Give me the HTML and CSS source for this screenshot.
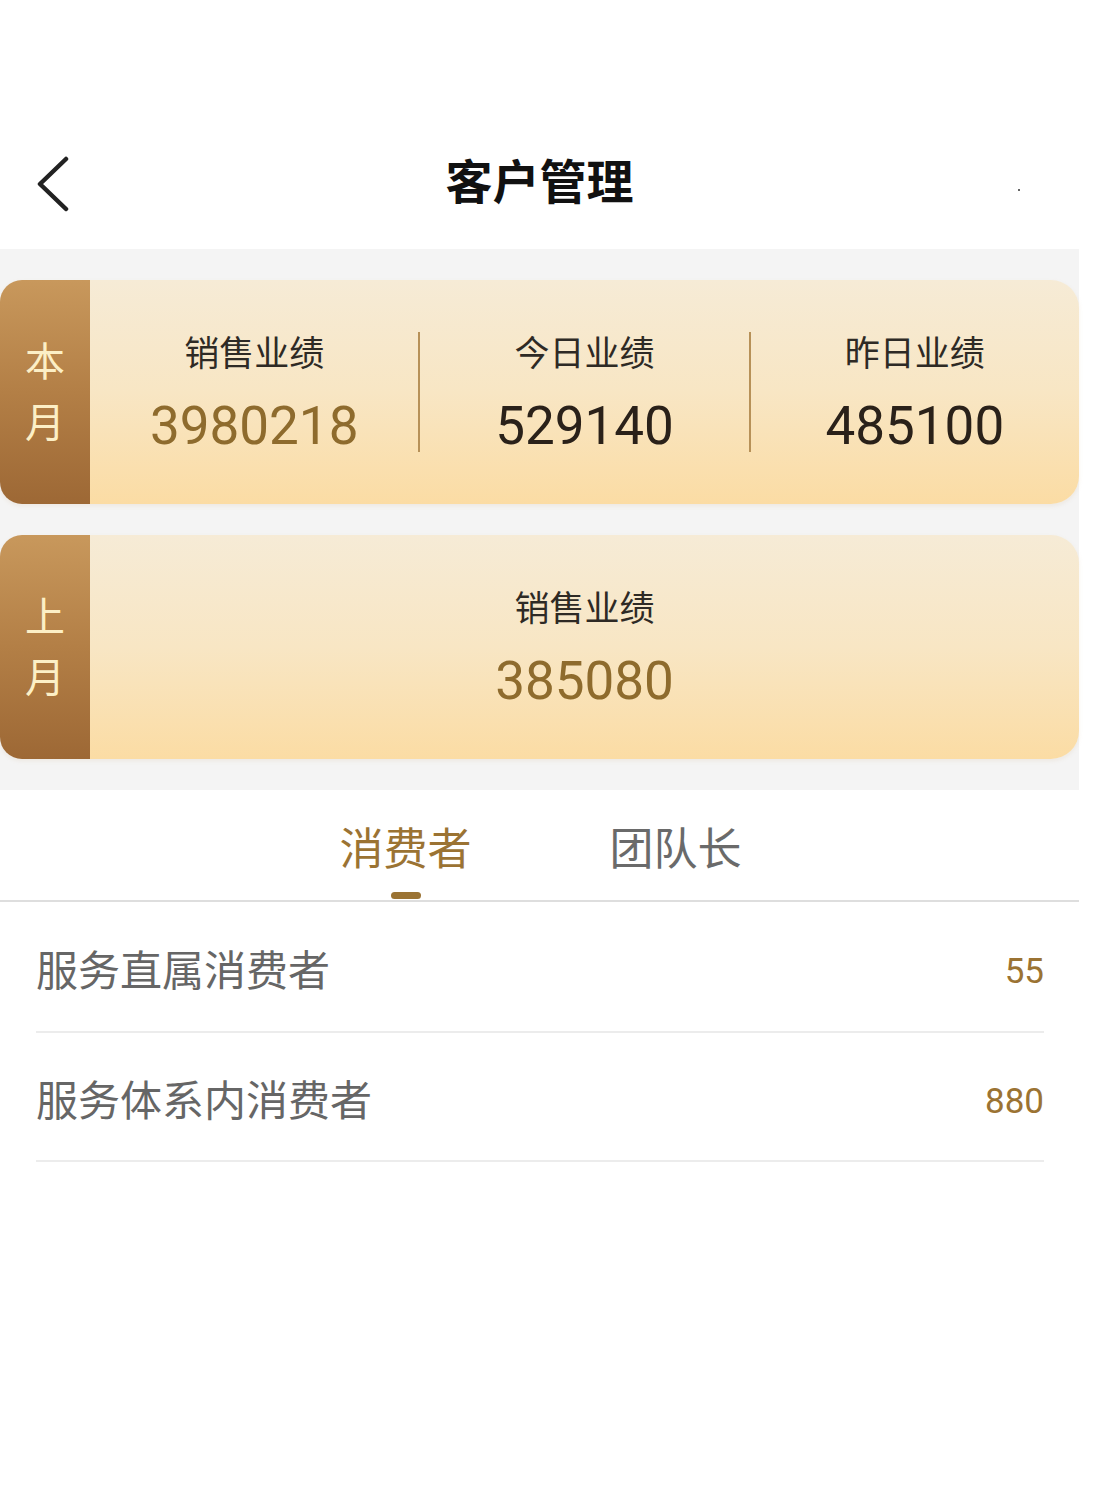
FILE: index.html
```html
<!DOCTYPE html>
<html lang="zh">
<head>
<meta charset="utf-8">
<title>客户管理</title>
<link rel="stylesheet" href="styles.css">
</head>
<body>
<div class="app">
  <header class="nav">
    <a class="back" href="#" aria-label="返回">
      <svg width="40" height="60" viewBox="0 0 40 60"><polyline points="32,7 6,32 32,57" fill="none" stroke="#222" stroke-width="4.5" stroke-linecap="round" stroke-linejoin="round"/></svg>
    </a>
    <h1 class="title">客户管理</h1>
    <span class="dot"></span>
  </header>

  <section class="summary">
    <div class="card">
      <div class="card-tab"><span>本</span><span>月</span></div>
      <div class="card-body">
        <div class="stat">
          <div class="stat-label">销售业绩</div>
          <div class="stat-value gold">3980218</div>
        </div>
        <div class="divider"></div>
        <div class="stat">
          <div class="stat-label">今日业绩</div>
          <div class="stat-value">529140</div>
        </div>
        <div class="divider"></div>
        <div class="stat">
          <div class="stat-label">昨日业绩</div>
          <div class="stat-value">485100</div>
        </div>
      </div>
    </div>
    <div class="card">
      <div class="card-tab"><span>上</span><span>月</span></div>
      <div class="card-body">
        <div class="stat">
          <div class="stat-label">销售业绩</div>
          <div class="stat-value gold">385080</div>
        </div>
      </div>
    </div>
  </section>

  <section class="panel">
    <nav class="tabs">
      <div class="tab active">消费者<span class="indicator"></span></div>
      <div class="tab">团队长</div>
    </nav>
    <ul class="list">
      <li class="row"><span class="row-label">服务直属消费者</span><span class="row-value">55</span></li>
      <li class="row"><span class="row-label">服务体系内消费者</span><span class="row-value">880</span></li>
    </ul>
  </section>
</div>
</body>
</html>
```

FILE: styles.css
```css
* { box-sizing: border-box; }
html, body { margin: 0; padding: 0; background: #fff; }
body {
  font-family: "Noto Sans CJK SC", "Noto Sans", Roboto, sans-serif;
  color: #333;
}
.app { width: 1079px; }

.nav {
  height: 249px;
  background: #fff;
  position: relative;
  display: flex;
  align-items: center;
  justify-content: center;
  padding-top: 122px;
  padding-bottom: 14px;
}
.back {
  position: absolute;
  left: 34px;
  top: 152px;
  display: block;
  width: 40px;
  height: 60px;
}
.back svg { display: block; }
.title {
  margin: 0;
  font-size: 47px;
  font-weight: 700;
  color: #111;
  line-height: 1;
  letter-spacing: 0;
}
.dot {
  position: absolute;
  left: 1018px;
  top: 189px;
  width: 2px;
  height: 2px;
  background: #666;
}

.summary {
  background: #f4f4f4;
  padding: 31px 0;
  display: flex;
  flex-direction: column;
  gap: 31px;
}
.card {
  height: 224px;
  display: flex;
  border-radius: 22px 28px 28px 22px;
  overflow: hidden;
  box-shadow: 0 2px 4px rgba(200, 170, 120, 0.15);
}
.card-tab {
  width: 90px;
  flex: none;
  background: linear-gradient(180deg, #c8985c 0%, #b37f46 50%, #9d6835 100%);
  display: flex;
  flex-direction: column;
  align-items: center;
  justify-content: center;
  color: #fcefc6;
  font-size: 40px;
  line-height: 61px;
  padding-bottom: 4px;
}
.card-body {
  flex: 1;
  display: flex;
  align-items: center;
  background: linear-gradient(180deg, #f6ebd6 0%, #f8e6c4 50%, #fbdca4 100%);
}
.stat {
  flex: 1;
  display: flex;
  flex-direction: column;
  align-items: center;
  padding-top: 3px;
}
.stat-label {
  font-size: 35px;
  line-height: 50px;
  color: #2e2a25;
}
.stat-value {
  font-family: Roboto, "Noto Sans", sans-serif;
  font-size: 53px;
  line-height: 70px;
  margin-top: 15px;
  color: #2a2119;
}
.stat-value.gold { color: #8e6b2d; }
.divider {
  width: 2px;
  height: 120px;
  background: #b79158;
  flex: none;
}

.panel {
  background: #fff;
  border-radius: 20px 20px 0 0;
  position: relative;
}
.tabs {
  height: 112px;
  display: flex;
  justify-content: center;
  gap: 138px;
  padding-left: 2px;
  border-bottom: 2px solid #dedede;
}
.tab {
  position: relative;
  font-size: 44px;
  line-height: 112px;
  color: #6a6a6a;
}
.tab.active { color: #9b7333; }
.indicator {
  position: absolute;
  left: 50%;
  bottom: 1px;
  width: 30px;
  height: 7px;
  margin-left: -15px;
  border-radius: 4px;
  background: #9b7333;
}
.list {
  list-style: none;
  margin: 0;
  padding: 0 35px 0 36px;
}
.row {
  height: 131px;
  display: flex;
  align-items: center;
  justify-content: space-between;
  border-bottom: 2px solid #ececec;
}
.row + .row { height: 129px; }
.row-label {
  font-size: 42px;
  color: #666;
  margin-top: 2px;
}
.row-value {
  font-family: Roboto, "Noto Sans", sans-serif;
  font-size: 35px;
  color: #9b7333;
  margin-top: 10px;
}
```
